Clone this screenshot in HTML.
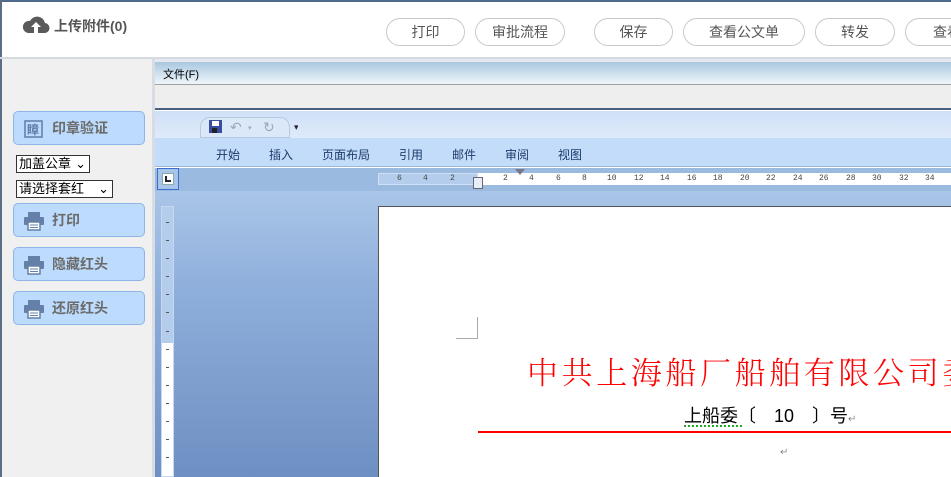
<!DOCTYPE html>
<html><head><meta charset="utf-8"><style>
*{margin:0;padding:0;box-sizing:border-box}
body{width:951px;height:477px;overflow:hidden;position:relative;background:#fff;font-family:"Liberation Sans","Noto Sans CJK SC",sans-serif}
.a{position:absolute}
.hb{position:absolute;top:18px;height:28px;border:1px solid #c8c8c8;border-radius:14px;background:#fff;font-size:14px;color:#555;text-align:center;line-height:26px}
.lb{position:absolute;left:13px;width:132px;height:34px;background:#bddbfc;border:1px solid #8fb5e8;border-radius:5px;font-size:14px;font-weight:bold;color:#6b6b6b;line-height:32px;padding-left:38px}
.pr{position:absolute;left:10px;top:8px}
.sel{position:absolute;left:16px;height:18px;border:1px solid #333;background:#fff;font-size:13px;line-height:16px;padding-left:2px;color:#000}
.tab{position:absolute;top:146px;font-size:12px;color:#1d3a6b}
.rn{position:absolute;top:174px;font-size:8px;color:#444;font-family:"Liberation Mono",monospace}
.vt{position:absolute;left:166px;width:3px;height:1px;background:#555}
</style></head><body>
<div class="a" style="left:0;top:0;width:951px;height:2px;background:#4f6a8a"></div>
<div class="a" style="left:0;top:0;width:2px;height:477px;background:#5b6e84"></div>
<svg class="a" style="left:22px;top:14px" width="28" height="20" viewBox="0 0 28 20"><path d="M6 19h16a5 5 0 0 0 1-10 8 8 0 0 0-15-2 6 6 0 0 0-2 12z" fill="#5a5a5a"/><path d="M14 8l-5 5h3v6h4v-6h3z" fill="#fff"/></svg>
<div class="a" style="left:54px;top:16px;font-size:14px;font-weight:bold;color:#555">上传附件(0)</div>
<div class="hb" style="left:386px;width:79px">打印</div>
<div class="hb" style="left:475px;width:90px">审批流程</div>
<div class="hb" style="left:594px;width:79px">保存</div>
<div class="hb" style="left:683px;width:122px">查看公文单</div>
<div class="hb" style="left:815px;width:80px">转发</div>
<div class="hb" style="left:905px;width:80px;text-align:left;padding-left:27px">查看</div>
<div class="a" style="left:0;top:57px;width:951px;height:2px;background:#d6dbe0"></div>
<div class="a" style="left:2px;top:59px;width:150px;height:418px;background:#f0f0f0"></div>
<div class="a" style="left:152px;top:59px;width:3px;height:418px;background:#d7dde3"></div>
<div class="lb" style="top:111px"><svg class="pr" width="20" height="18"><rect x="1" y="1" width="17" height="16" fill="none" stroke="#5e7ca8" stroke-width="1.5"/><text x="3" y="14" font-size="12" fill="#5e7ca8" font-family="Noto Sans CJK SC">瞕</text></svg>印章验证</div>
<div class="sel" style="top:155px;width:74px">加盖公章 <span style="position:absolute;right:3px;top:0">⌄</span></div>
<div class="sel" style="top:180px;width:97px">请选择套红 <span style="position:absolute;right:3px;top:0">⌄</span></div>
<svg width="0" height="0" style="position:absolute"><defs><g id="p"><rect x="4" y="0" width="12" height="5" fill="#6480a8"/><rect x="0" y="5" width="20" height="8" rx="1" fill="#6480a8"/><rect x="4" y="10" width="12" height="8" fill="#fff" stroke="#6480a8" stroke-width="1.5"/><line x1="6" y1="13" x2="14" y2="13" stroke="#6480a8"/><line x1="6" y1="15.5" x2="14" y2="15.5" stroke="#6480a8"/></g></defs></svg>
<div class="lb" style="top:203px"><svg class="pr" width="20" height="19"><use href="#p"/></svg>打印</div>
<div class="lb" style="top:247px"><svg class="pr" width="20" height="19"><use href="#p"/></svg>隐藏红头</div>
<div class="lb" style="top:291px"><svg class="pr" width="20" height="19"><use href="#p"/></svg>还原红头</div>
<!-- word -->
<div class="a" style="left:155px;top:59px;width:796px;height:3px;background:#e3e9ef"></div>
<div class="a" style="left:155px;top:62px;width:796px;height:23px;background:linear-gradient(#a9c8e0,#f0f5fa);border-bottom:1px solid #a0a0a0"></div>
<div class="a" style="left:163px;top:66px;font-size:11px;color:#000">文件(F)</div>
<div class="a" style="left:155px;top:85px;width:796px;height:25px;background:#eeeeee;border-bottom:2px solid #4a6080"></div>
<div class="a" style="left:155px;top:111px;width:796px;height:27px;background:linear-gradient(#cfe0f6,#dfeafa)"></div>
<div class="a" style="left:200px;top:117px;width:90px;height:21px;background:#dbe8f8;border:1px solid #b5c9e4;border-radius:10px 10px 0 0"></div>
<svg class="a" style="left:208px;top:119px" width="90" height="16"><rect x="1" y="1" width="13" height="13" fill="#3a4da0"/><rect x="4" y="2" width="7" height="5" fill="#fff"/><rect x="4" y="9" width="5" height="5" fill="#222"/><text x="22" y="13" font-size="14" fill="#9aa8ba">↶</text><text x="40" y="11" font-size="7" fill="#9aa8ba">▾</text><text x="55" y="13" font-size="14" fill="#9aa8ba">↻</text><text x="86" y="11" font-size="9" fill="#223">▾</text></svg>
<div class="a" style="left:155px;top:138px;width:796px;height:29px;background:#c3dcfa;border-bottom:1px solid #9ab6dc"></div>
<div class="tab" style="left:216px">开始</div><div class="tab" style="left:269px">插入</div><div class="tab" style="left:322px">页面布局</div><div class="tab" style="left:399px">引用</div><div class="tab" style="left:452px">邮件</div><div class="tab" style="left:505px">审阅</div><div class="tab" style="left:558px">视图</div>
<div class="a" style="left:155px;top:168px;width:796px;height:309px;background:linear-gradient(#b0cbeb,#8eaedb 40%,#6e8fc2)"></div>
<div class="a" style="left:155px;top:168px;width:796px;height:23px;background:#9bbae0"></div>
<div class="a" style="left:157px;top:168px;width:22px;height:22px;border:1px solid #3a6fd0;background:#a8c4e8"></div>
<div class="a" style="left:162px;top:173px;width:12px;height:12px;background:#fff;border:1px solid #8aa"></div>
<div class="a" style="left:165px;top:176px;width:6px;height:6px;border-left:2px solid #223;border-bottom:2px solid #223"></div>
<div class="a" style="left:378px;top:173px;width:100px;height:12px;background:#b5cdec;border:1px solid #d0e0f4"></div>
<div class="a" style="left:478px;top:173px;width:473px;height:12px;background:#fff"></div>
<div class="rn" style="left:397px">6</div><div class="rn" style="left:423px">4</div><div class="rn" style="left:450px">2</div>
<div class="rn" style="left:503px">2</div><div class="rn" style="left:529px">4</div><div class="rn" style="left:556px">6</div><div class="rn" style="left:582px">8</div>
<div class="rn" style="left:607px">10</div><div class="rn" style="left:634px">12</div><div class="rn" style="left:660px">14</div><div class="rn" style="left:687px">16</div><div class="rn" style="left:713px">18</div><div class="rn" style="left:740px">20</div><div class="rn" style="left:766px">22</div><div class="rn" style="left:793px">24</div><div class="rn" style="left:819px">26</div><div class="rn" style="left:846px">28</div><div class="rn" style="left:872px">30</div><div class="rn" style="left:899px">32</div><div class="rn" style="left:925px">34</div>
<div class="a" style="left:473px;top:177px;width:10px;height:12px;background:#e8eef8;border:1px solid #667"></div>
<div class="a" style="left:515px;top:169px;width:0;height:0;border-left:5px solid transparent;border-right:5px solid transparent;border-top:6px solid #778"></div>
<div class="a" style="left:161px;top:206px;width:13px;height:271px;background:#fff;border:1px solid #c8d8ee"></div>
<div class="a" style="left:162px;top:207px;width:11px;height:136px;background:#b5cdec"></div>
<div class="vt" style="top:222px"></div><div class="vt" style="top:240px"></div><div class="vt" style="top:258px"></div><div class="vt" style="top:276px"></div><div class="vt" style="top:294px"></div><div class="vt" style="top:312px"></div><div class="vt" style="top:331px"></div><div class="vt" style="top:349px"></div><div class="vt" style="top:367px"></div><div class="vt" style="top:385px"></div><div class="vt" style="top:403px"></div><div class="vt" style="top:421px"></div><div class="vt" style="top:439px"></div><div class="vt" style="top:457px"></div>
<div class="a" style="left:378px;top:206px;width:573px;height:271px;background:#fff;border-left:1px solid #555;border-top:1px solid #555"></div>
<div class="a" style="left:456px;top:317px;width:22px;height:22px;border-right:1px solid #aaa;border-bottom:1px solid #aaa"></div>
<div class="a" style="left:527px;top:348px;font-size:31px;letter-spacing:3.6px;color:#f00;white-space:nowrap;font-family:'Noto Serif CJK SC','Liberation Serif',serif;font-weight:300">中共上海船厂船舶有限公司委</div>
<div class="a" style="left:684px;top:402px;font-size:18px;color:#000;white-space:nowrap">上船委〔　10　〕号<span style="font-size:10px;color:#888">↵</span></div>
<div class="a" style="left:684px;top:425px;width:58px;height:2px;border-bottom:2px dotted #2a2"></div>
<div class="a" style="left:478px;top:431px;width:473px;height:2px;background:#f00"></div>
<div class="a" style="left:780px;top:447px;font-size:10px;color:#888">↵</div>
</body></html>
